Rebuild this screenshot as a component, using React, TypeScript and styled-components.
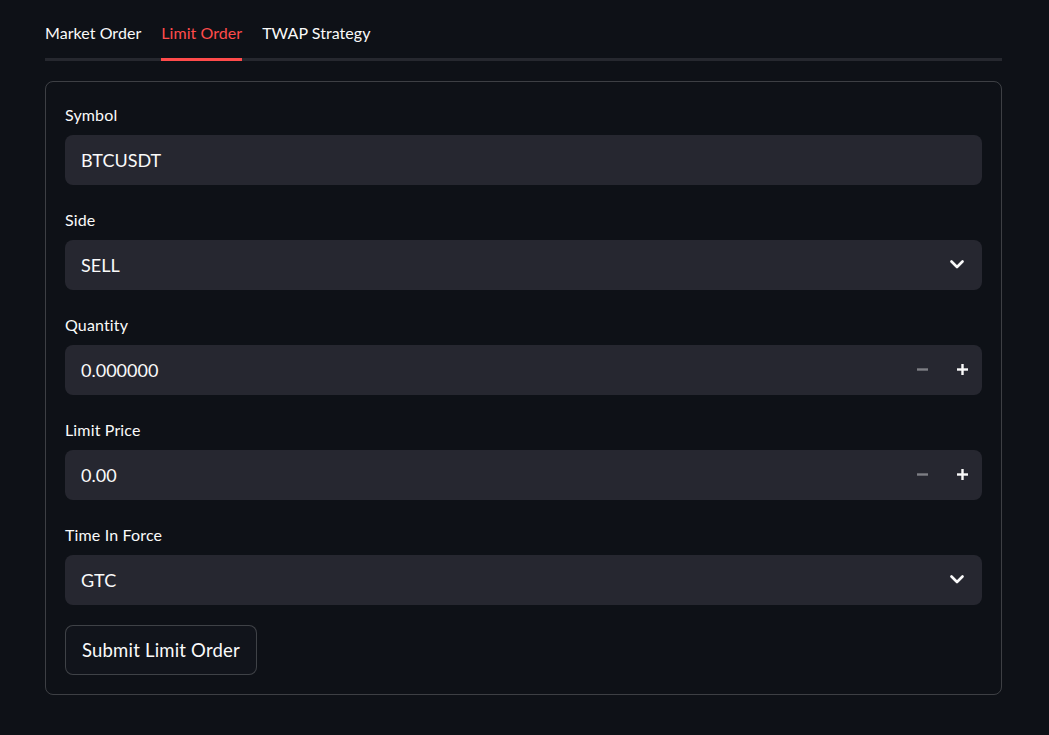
import React from "react";
import styled, { createGlobalStyle } from "styled-components";

const Global = createGlobalStyle`
  html, body { margin: 0; padding: 0; background: #0e1117; }
  body { font-family: "Lato", "Noto Sans", sans-serif; color: #fafafa; }
  * { box-sizing: border-box; }
`;

const Page = styled.div`
  width: 1049px;
  min-height: 735px;
  padding: 0 47px 0 45px;
  background: #0e1117;
`;

const TabList = styled.div`
  display: flex;
  gap: 20px;
  height: 61px;
  align-items: flex-end;
  border-bottom: 3px solid #26282f;
`;

const Tab = styled.div<{ $active?: boolean }>`
  position: relative;
  font-size: 16px;
  line-height: 20px;
  letter-spacing: 0.05px;
  padding-bottom: 15px;
  color: ${(p) => (p.$active ? "#ff4b4b" : "#fafafa")};
  &::after {
    content: "";
    position: absolute;
    left: 0;
    right: 0;
    bottom: -3px;
    height: 3px;
    background: ${(p) => (p.$active ? "#ff4b4b" : "transparent")};
  }
`;

const Form = styled.div`
  margin-top: 20px;
  border: 1px solid rgba(250, 250, 250, 0.2);
  border-radius: 8px;
  padding: 22px 19px 19px 19px;
  display: flex;
  flex-direction: column;
  gap: 24px;
`;

const Field = styled.div`
  display: flex;
  flex-direction: column;
  gap: 10px;
`;

const Label = styled.div`
  font-size: 16px;
  line-height: 21px;
  letter-spacing: 0.15px;
  color: #fafafa;
`;

const InputBox = styled.div`
  height: 50px;
  border-radius: 8px;
  background: #262730;
  display: flex;
  align-items: center;
  padding: 0 16px 1px 16px;
  font-size: 18px;
  color: #fafafa;
`;

const Value = styled.div`
  flex: 1;
`;

const StepButtons = styled.div`
  display: flex;
  align-items: center;
  margin-right: -16px;
`;

const Step = styled.div<{ $disabled?: boolean }>`
  width: 40px;
  height: 50px;
  display: flex;
  align-items: center;
  justify-content: center;
  color: ${(p) => (p.$disabled ? "#7d7e84" : "#fafafa")};
`;

const Chevron = styled.div`
  display: flex;
  align-items: center;
  margin-right: 2px;
`;

const SubmitButton = styled.button`
  align-self: flex-start;
  margin-top: -4px;
  height: 50px;
  padding: 0 16px 1px 16px;
  border-radius: 8px;
  border: 1px solid rgba(250, 250, 250, 0.2);
  background: #11141b;
  color: #fafafa;
  font-family: inherit;
  font-size: 18.5px;
  letter-spacing: 0.2px;
  cursor: pointer;
`;

const ChevronIcon = () => (
  <svg width="14" height="9" viewBox="0 0 14 9">
    <path d="M1.5 1.5 L7 7 L12.5 1.5" fill="none" stroke="#fafafa" strokeWidth="2.6" strokeLinecap="round" strokeLinejoin="round" />
  </svg>
);

const Minus = () => (
  <svg width="11" height="11" viewBox="0 0 11 11">
    <rect x="0" y="4.3" width="11" height="2.4" fill="currentColor" />
  </svg>
);

const Plus = () => (
  <svg width="11" height="11" viewBox="0 0 11 11">
    <rect x="0" y="4.3" width="11" height="2.4" fill="currentColor" />
    <rect x="4.3" y="0" width="2.4" height="11" fill="currentColor" />
  </svg>
);

const TextField = ({ label, value }: { label: string; value: string }) => (
  <Field>
    <Label>{label}</Label>
    <InputBox>
      <Value>{value}</Value>
    </InputBox>
  </Field>
);

const SelectField = ({ label, value }: { label: string; value: string }) => (
  <Field>
    <Label>{label}</Label>
    <InputBox>
      <Value>{value}</Value>
      <Chevron>
        <ChevronIcon />
      </Chevron>
    </InputBox>
  </Field>
);

const NumberField = ({ label, value }: { label: string; value: string }) => (
  <Field>
    <Label>{label}</Label>
    <InputBox>
      <Value>{value}</Value>
      <StepButtons>
        <Step $disabled>
          <Minus />
        </Step>
        <Step>
          <Plus />
        </Step>
      </StepButtons>
    </InputBox>
  </Field>
);

export default function App() {
  return (
    <Page>
      <Global />
      <TabList>
        <Tab>Market Order</Tab>
        <Tab $active>Limit Order</Tab>
        <Tab>TWAP Strategy</Tab>
      </TabList>
      <Form>
        <TextField label="Symbol" value="BTCUSDT" />
        <SelectField label="Side" value="SELL" />
        <NumberField label="Quantity" value="0.000000" />
        <NumberField label="Limit Price" value="0.00" />
        <SelectField label="Time In Force" value="GTC" />
        <SubmitButton>Submit Limit Order</SubmitButton>
      </Form>
    </Page>
  );
}
